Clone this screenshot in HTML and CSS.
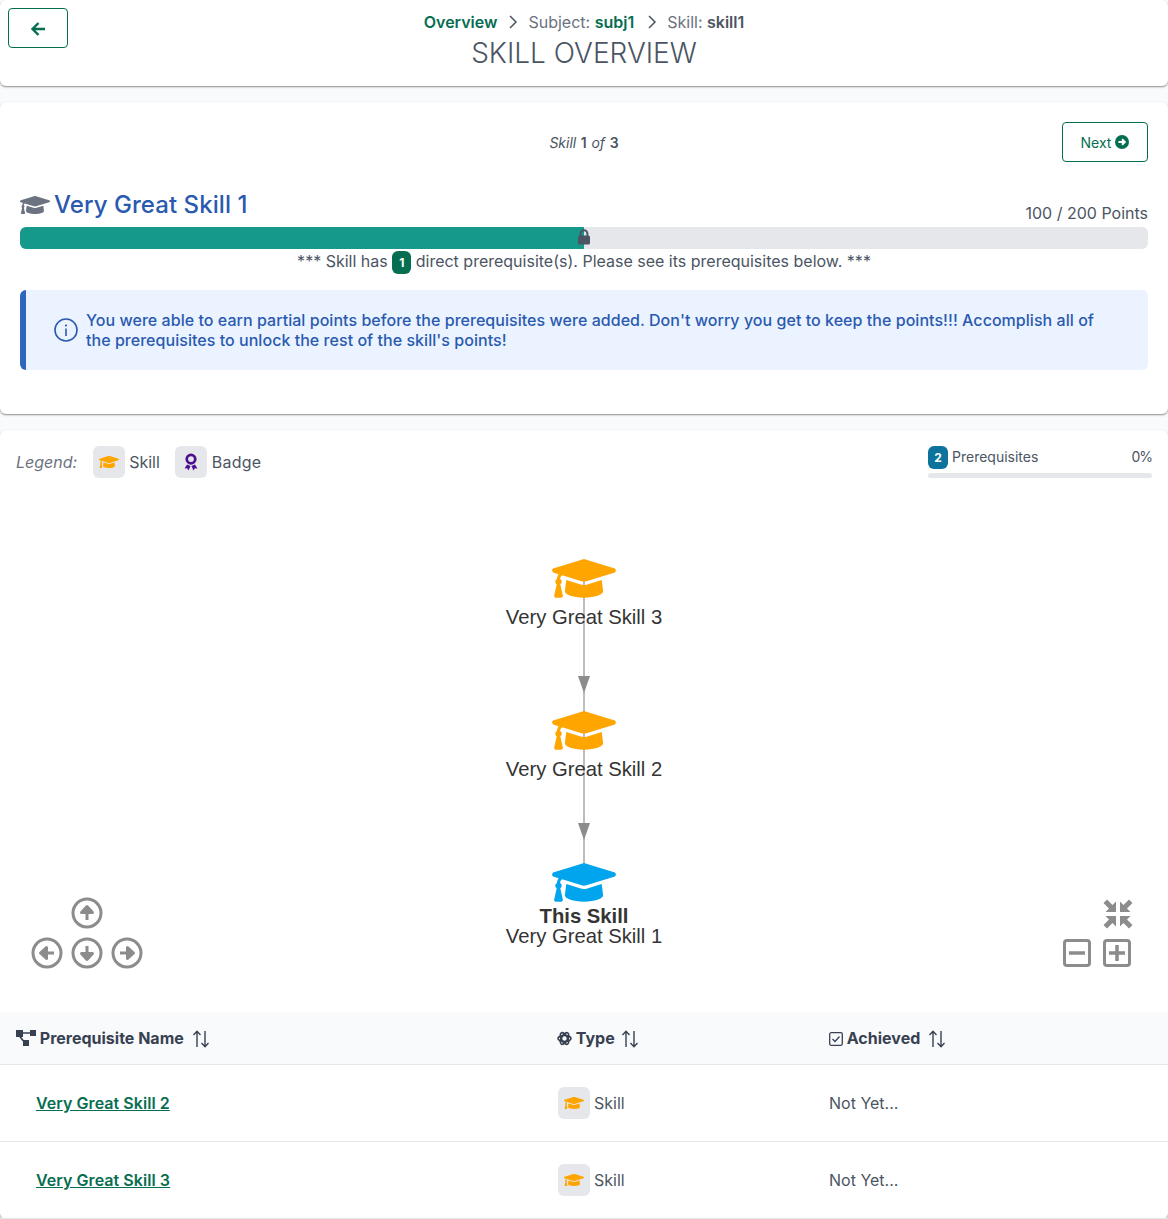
FILE: index.html
```html
<!DOCTYPE html>
<html lang="en">
<head>
  <meta charset="UTF-8" />
  <title>Skill Overview</title>
  <link rel="stylesheet" href="styles.css">
</head>
<body>

  <svg class="defs" width="0" height="0">
    <symbol id="cap" viewBox="0 0 640 512">
      <path d="M622.34 153.2L343.4 67.5c-15.2-4.67-31.6-4.67-46.79 0L17.66 153.2c-23.54 7.23-23.54 38.36 0 45.59l48.63 14.94c-10.67 13.19-17.23 29.28-17.88 46.9C38.78 266.15 32 276.11 32 288c0 10.78 5.68 19.85 13.86 25.65L20.33 428.53C18.11 438.52 25.71 448 35.94 448h56.11c10.24 0 17.84-9.48 15.62-19.47L82.14 313.65C90.32 307.85 96 298.78 96 288c0-11.57-6.47-21.25-15.66-26.87.76-15.02 8.44-28.3 20.69-36.72L296.6 284.5c9.06 2.78 26.44 6.25 46.79 0l278.95-85.7c23.55-7.24 23.55-38.36 0-45.6zM352.79 315.09c-28.53 8.76-52.84 3.92-65.59 0l-145.02-44.55L128 384c0 35.35 85.96 64 192 64s192-28.65 192-64l-14.18-113.47-145.03 44.56z"/>
    </symbol>
    <symbol id="sort" viewBox="0 0 18 18">
      <path d="M5 17V1.500M1.500 5 5 1.200 8.500 5M13 1v15.500M9.500 13l3.500 3.800 3.500-3.800" fill="none" stroke="currentColor" stroke-width="1.4"/>
    </symbol>
  </svg>

  <!-- Header -->
  <div class="card header">
    <button class="btn back-btn">
      <svg width="16" height="16" viewBox="0 0 16 16"><path d="M15 8H3M8.500 2 2.500 8l6 6" fill="none" stroke="currentColor" stroke-width="2.400"/></svg>
    </button>
    <div class="crumbs">
      <a class="crumb-link">Overview</a>
      <svg class="chev chev-first" width="10" height="14" viewBox="0 0 10 14"><path d="M2 1l6 6-6 6" fill="none" stroke="currentColor" stroke-width="1.500"/></svg>
      <span>Subject: <b class="crumb-value">subj1</b></span>
      <svg class="chev chev-second" width="10" height="14" viewBox="0 0 10 14"><path d="M2 1l6 6-6 6" fill="none" stroke="currentColor" stroke-width="1.500"/></svg>
      <span>Skill: <b class="crumb-current">skill1</b></span>
    </div>
    <h1 class="page-title">SKILL OVERVIEW</h1>
  </div>

  <!-- Skill -->
  <div class="card skill">
    <div class="pager">
      <div class="pager-text"><i>Skill</i> <b>1</b> <i>of</i> <b>3</b></div>
      <button class="btn next-btn">Next
        <svg width="14" height="14" viewBox="0 0 14 14"><circle cx="7" cy="7" r="7" fill="currentColor"/><path d="M3.400 7h6M7 4.200 9.800 7 7 9.800" fill="none" stroke="#fff" stroke-width="2"/></svg>
      </button>
    </div>
    <div class="skill-head">
      <h2 class="skill-title"><svg class="skill-cap"><use href="#cap"/></svg>Very Great Skill 1</h2>
      <div class="points">100 / 200 Points</div>
    </div>
    <div class="progress">
      <div class="progress-fill" style="width: 50%"></div>
      <svg class="lock" width="14" height="16" viewBox="0 0 14 16"><path d="M3.600 7V4.600a3.400 3.400 0 0 1 6.800 0V7" fill="none" stroke="#4b5563" stroke-width="2"/><rect x="1" y="6.500" width="12" height="9" rx="1.500" fill="#4b5563"/></svg>
    </div>
    <div class="prereq-note">*** Skill has <span class="count-badge">1</span> direct prerequisite(s). Please see its prerequisites below. ***</div>
    <div class="alert">
      <svg class="alert-icon" width="24" height="24" viewBox="0 0 24 24"><circle cx="12" cy="12" r="11" fill="none" stroke="currentColor" stroke-width="1.600"/><path d="M12 10.500V18" stroke="currentColor" stroke-width="1.600"/><circle cx="12" cy="7.500" r="1.100" fill="currentColor"/></svg>
      <div>You were able to earn partial points before the prerequisites were added. Don't worry you get to keep the points!!! Accomplish all of the prerequisites to unlock the rest of the skill's points!</div>
    </div>
  </div>

  <!-- Graph + table -->
  <div class="card prereqs">
    <div class="graph-top">
      <div class="legend">
        <i class="legend-label">Legend:</i>
        <span class="type-icon"><svg class="mini-cap"><use href="#cap"/></svg></span>
        <span class="legend-name">Skill</span>
        <span class="type-icon">
          <svg width="14" height="18" viewBox="0 0 14 18" fill="#4c0d8f"><path d="M7 .500a5.600 5.600 0 1 0 0 11.200a5.600 5.600 0 0 0 0-11.200zm0 2.700a2.900 2.900 0 1 1 0 5.800a2.900 2.900 0 0 1 0-5.800z"/><path d="M3 11.500 .600 15.500l2.600-.2 1.300 2.200L6.500 13zM11 11.500l2.400 4-2.600-.2-1.300 2.200L7.500 13z"/></svg>
        </span>
        <span class="legend-name legend-badge">Badge</span>
      </div>
      <div class="graph-progress">
        <div class="graph-progress-labels">
          <span class="count-badge blue">2</span>
          <span class="graph-progress-name">Prerequisites</span>
          <span class="graph-progress-pct">0%</span>
        </div>
        <div class="thin-bar"></div>
      </div>
    </div>

    <div class="graph">
      <div class="edge edge-one"></div>
      <div class="edge edge-two"></div>
      <div class="arrow arrow-one"></div>
      <div class="arrow arrow-two"></div>

      <div class="node node-one"><svg class="node-cap"><use href="#cap"/></svg><div class="node-label">Very Great Skill 3</div></div>
      <div class="node node-two"><svg class="node-cap"><use href="#cap"/></svg><div class="node-label">Very Great Skill 2</div></div>
      <div class="node node-three"><svg class="node-cap current"><use href="#cap"/></svg><div class="node-label"><b>This Skill</b><br>Very Great Skill 1</div></div>

      <svg class="nav-btn nav-up" viewBox="0 0 32 32"><circle cx="16" cy="16" r="14" class="ring"/><path d="M16 23V13M10.500 15.500 16 9.500l5.500 6z" class="glyph"/></svg>
      <svg class="nav-btn nav-left" viewBox="0 0 32 32"><circle cx="16" cy="16" r="14" class="ring"/><path d="M23 16H13M15.500 10.500 9.500 16l6 5.500z" class="glyph"/></svg>
      <svg class="nav-btn nav-down" viewBox="0 0 32 32"><circle cx="16" cy="16" r="14" class="ring"/><path d="M16 9v10M10.500 16.500 16 22.500l5.500-6z" class="glyph"/></svg>
      <svg class="nav-btn nav-right" viewBox="0 0 32 32"><circle cx="16" cy="16" r="14" class="ring"/><path d="M9 16h10M16.500 10.500l6 5.500-6 5.500z" class="glyph"/></svg>

      <svg class="nav-btn nav-fit" viewBox="0 0 32 32"><path d="M14 14V3.500L10.500 7 5 1.500 1.500 5 7 10.500 3.500 14zM18 14V3.500L21.500 7 27 1.500 30.500 5 25 10.500 28.500 14zM14 18V28.500L10.500 25 5 30.500 1.500 27 7 21.500 3.500 18zM18 18V28.500L21.500 25 27 30.500 30.500 27 25 21.500 28.500 18z" fill="#8c8c8c"/></svg>
      <svg class="nav-btn nav-box nav-minus" viewBox="0 0 28 28"><rect x="1.500" y="1.500" width="25" height="25" rx="2.500" class="ring"/><path d="M6 14h16" class="bar"/></svg>
      <svg class="nav-btn nav-box nav-plus" viewBox="0 0 28 28"><rect x="1.500" y="1.500" width="25" height="25" rx="2.500" class="ring"/><path d="M6 14h16M14 6v16" class="bar"/></svg>
    </div>

    <table class="prereq-table">
      <thead>
        <tr>
          <th class="col-name">
            <svg class="th-icon" width="20" height="16" viewBox="0 0 20 16" fill="#374151"><rect x="0" y="0" width="7" height="7"/><rect x="14" y="0" width="6" height="6"/><rect x="7" y="10" width="6" height="6"/><path d="M7 2.200h7v1.600H7zM4.500 6l4 5-1.300 1-4-5z"/></svg>
            Prerequisite Name <svg class="sort-icon"><use href="#sort"/></svg>
          </th>
          <th class="col-type">
            <svg class="th-icon" width="15" height="15" viewBox="0 0 15 15" fill="none" stroke="#374151" stroke-width="1.700"><ellipse cx="7.500" cy="7.500" rx="6.500" ry="3"/><ellipse cx="7.500" cy="7.500" rx="6.500" ry="3" transform="rotate(60 7.500 7.500)"/><ellipse cx="7.500" cy="7.500" rx="6.500" ry="3" transform="rotate(120 7.500 7.500)"/></svg>
            Type <svg class="sort-icon"><use href="#sort"/></svg>
          </th>
          <th class="col-done">
            <svg class="th-icon" width="14" height="14" viewBox="0 0 14 14"><rect x=".700" y=".700" width="12.600" height="12.600" rx="1.500" fill="none" stroke="#374151" stroke-width="1.300"/><path d="M3.500 7l2.500 2.500 4.500-5" fill="none" stroke="#374151" stroke-width="1.300"/></svg>
            Achieved <svg class="sort-icon"><use href="#sort"/></svg>
          </th>
        </tr>
      </thead>
      <tbody>
        <tr>
          <td class="col-name"><a class="skill-link">Very Great Skill 2</a></td>
          <td class="col-type"><div class="type-cell"><span class="type-icon"><svg class="mini-cap"><use href="#cap"/></svg></span>Skill</div></td>
          <td class="col-done">Not Yet...</td>
        </tr>
        <tr>
          <td class="col-name"><a class="skill-link">Very Great Skill 3</a></td>
          <td class="col-type"><div class="type-cell"><span class="type-icon"><svg class="mini-cap"><use href="#cap"/></svg></span>Skill</div></td>
          <td class="col-done">Not Yet...</td>
        </tr>
      </tbody>
    </table>
  </div>

</body>
</html>
```

FILE: styles.css
```css
* {
  box-sizing: border-box;
}

html, body {
  margin: 0;
}

body {
  font-family: Inter, "Liberation Sans", sans-serif;
  font-size: 16px;
  background: #f9fafb;
  color: #4b5563;
  display: flex;
  flex-direction: column;
  gap: 16px;
  height: 1219px;
  overflow: hidden;
}

.defs {
  position: absolute;
}

.card {
  background: #fff;
  border-radius: 6px;
  box-shadow: 0 1px 2px rgba(0, 0, 0, 0.45);
}

.btn {
  display: flex;
  align-items: center;
  justify-content: center;
  background: #fff;
  border: 1px solid #066e50;
  border-radius: 4px;
  color: #066e50;
  font: inherit;
}

/* Header */
.header {
  position: relative;
  height: 86px;
  padding-top: 11px;
  text-align: center;
  flex-shrink: 0;
}

.back-btn {
  position: absolute;
  left: 8px;
  top: 8px;
  width: 60px;
  height: 40px;
  padding-top: 2px;
}

.crumbs {
  display: flex;
  justify-content: center;
  align-items: center;
  gap: 11px;
  height: 21px;
  color: #6b7280;
}

.crumb-link {
  color: #066e50;
  font-weight: 600;
}

.crumb-value {
  color: #066e50;
  font-weight: 600;
}

.crumb-current {
  color: #4b5563;
  font-weight: 600;
}

.chev {
  color: #4b5563;
}

.chev-first {
  margin-right: -1px;
}

.chev-second {
  margin-left: 2px;
  margin-right: -1px;
}

.page-title {
  margin: 3px 0 0;
  font-size: 28px;
  line-height: 36px;
  font-weight: 300;
  color: #4b5563;
}

/* Skill */
.skill {
  height: 312px;
  padding: 20px 20px 0;
  flex-shrink: 0;
}

.pager {
  position: relative;
  height: 40px;
  display: flex;
  justify-content: center;
  align-items: center;
  font-size: 14px;
  word-spacing: 0.7px;
}

.pager b {
  font-weight: 600;
}

.next-btn {
  position: absolute;
  right: 0;
  top: 0;
  width: 86px;
  height: 40px;
  gap: 4px;
  font-size: 14px;
}

.skill-head {
  display: flex;
  justify-content: space-between;
  align-items: flex-end;
  margin-top: 24px;
  height: 41px;
  padding-bottom: 4px;
}

.skill-title {
  margin: 0;
  display: flex;
  align-items: center;
  font-size: 24px;
  line-height: 36px;
  font-weight: 500;
  letter-spacing: 0.06px;
  color: #2a5ab0;
}

.skill-cap {
  width: 30px;
  height: 24px;
  margin-right: 4px;
  fill: #6b7280;
}

.points {
  font-size: 16px;
  line-height: 20px;
}

.progress {
  position: relative;
  height: 22px;
  background: #e5e7eb;
  border-radius: 6px;
}

.progress-fill {
  height: 100%;
  background: #14998a;
  border-radius: 6px 0 0 6px;
}

.lock {
  position: absolute;
  left: 50%;
  top: 2px;
  margin-left: -7px;
}

.prereq-note {
  height: 24px;
  text-align: center;
  line-height: 24px;
  white-space: nowrap;
}

.count-badge {
  display: inline-block;
  width: 19px;
  height: 23px;
  line-height: 23px;
  border-radius: 6px;
  background: #066e50;
  color: #fff;
  font-size: 12px;
  font-weight: 700;
  text-align: center;
}

.alert {
  display: flex;
  align-items: center;
  gap: 8px;
  height: 80px;
  margin-top: 17px;
  padding: 0 48px 0 28px;
  background: #eaf3ff;
  border-left: 6px solid #2e65bd;
  border-radius: 6px;
  color: #2a5ab0;
  font-weight: 500;
  letter-spacing: 0.04px;
  line-height: 20px;
}

.alert-icon {
  flex-shrink: 0;
}

/* Graph */
.prereqs {
  flex: 1;
}

.graph-top {
  display: flex;
  justify-content: space-between;
  padding: 16px 16px 0;
  height: 56px;
}

.legend {
  display: flex;
  align-items: center;
  height: 32px;
}

.legend-label {
  color: #6b7280;
  margin-right: 16px;
}

.legend-name {
  margin-left: 4px;
  margin-right: 15px;
}

.legend-badge {
  margin-left: 5px;
  letter-spacing: 0.2px;
}

.type-icon {
  display: inline-flex;
  align-items: center;
  justify-content: center;
  width: 32px;
  height: 32px;
  border-radius: 6px;
  background: #e5e7eb;
}

.mini-cap {
  width: 20px;
  height: 16px;
  fill: #ffa500;
}

.graph-progress {
  width: 224px;
}

.graph-progress-labels {
  display: flex;
  align-items: center;
  height: 23px;
  font-size: 14px;
}

.graph-progress-name {
  margin-left: 4px;
  padding-bottom: 2px;
}

.graph-progress-pct {
  margin-left: auto;
  padding-bottom: 2px;
  letter-spacing: -1px;
}

.count-badge.blue {
  width: 20px;
  background: #0d739c;
}

.thin-bar {
  height: 5px;
  margin-top: 4px;
  background: #e5e7eb;
  border-radius: 3px;
}

.graph {
  position: relative;
  height: 526px;
  font-family: "Liberation Sans", Arial, sans-serif;
}

.edge {
  position: absolute;
  left: 583px;
  width: 2px;
  background: #bdbdbd;
}

.edge-one {
  top: 94px;
  height: 145px;
}

.edge-two {
  top: 246px;
  height: 138px;
}

.arrow {
  position: absolute;
  left: 578px;
  width: 0;
  height: 0;
  border-left: 6px solid transparent;
  border-right: 6px solid transparent;
  border-top: 17px solid #8c8c8c;
}

.arrow-one {
  top: 190px;
}

.arrow-two {
  top: 337px;
}

.node {
  position: absolute;
  left: 484px;
  width: 200px;
  text-align: center;
}

.node-one {
  top: 67px;
}

.node-two {
  top: 219px;
}

.node-three {
  top: 371px;
}

.node-cap {
  display: block;
  width: 64px;
  height: 51px;
  margin: 0 auto;
  fill: #ffa500;
}

.node-cap.current {
  fill: #00a5ed;
}

.node-label {
  margin-top: 3px;
  font-size: 20.25px;
  line-height: 20px;
  color: #343434;
}

.node-three .node-label {
  margin-top: -2px;
}

.nav-btn {
  position: absolute;
  width: 32px;
  height: 32px;
}

.nav-box {
  width: 28px;
  height: 28px;
}

.nav-btn .ring {
  fill: none;
  stroke: #8c8c8c;
  stroke-width: 3;
}

.nav-btn .glyph {
  fill: #8c8c8c;
  stroke: #8c8c8c;
  stroke-width: 3;
  stroke-linejoin: round;
}

.nav-btn .bar {
  stroke: #8c8c8c;
  stroke-width: 3.5;
}

.nav-up {
  left: 71px;
  top: 411px;
}

.nav-left {
  left: 31px;
  top: 451px;
}

.nav-down {
  left: 71px;
  top: 451px;
}

.nav-right {
  left: 111px;
  top: 451px;
}

.nav-fit {
  left: 1102px;
  top: 412px;
}

.nav-minus {
  left: 1063px;
  top: 453px;
}

.nav-plus {
  left: 1103px;
  top: 453px;
}

/* Table */
.prereq-table {
  width: 100%;
  border-collapse: collapse;
  table-layout: fixed;
}

.prereq-table th {
  height: 52px;
  background: #f9fafb;
  color: #374151;
  font-weight: 700;
  text-align: left;
  border-bottom: 1px solid #e5e7eb;
  padding: 0 16px;
  white-space: nowrap;
}

.prereq-table td {
  height: 77px;
  border-bottom: 1px solid #e5e7eb;
  padding: 0 16px;
}

.col-name {
  width: 541px;
}

.col-type {
  width: 272px;
}

td.col-name {
  padding-left: 36px;
}

td.col-type {
  padding-left: 17px;
}

.skill-link {
  color: #066e50;
  font-weight: 600;
  letter-spacing: 0.06px;
  text-decoration: underline;
}

.type-cell {
  display: flex;
  align-items: center;
  gap: 4px;
}

.th-icon {
  vertical-align: -2px;
}

.sort-icon {
  width: 18px;
  height: 18px;
  margin-left: 4px;
  vertical-align: -4px;
}

.col-type .sort-icon {
  margin-left: 2px;
}
```
